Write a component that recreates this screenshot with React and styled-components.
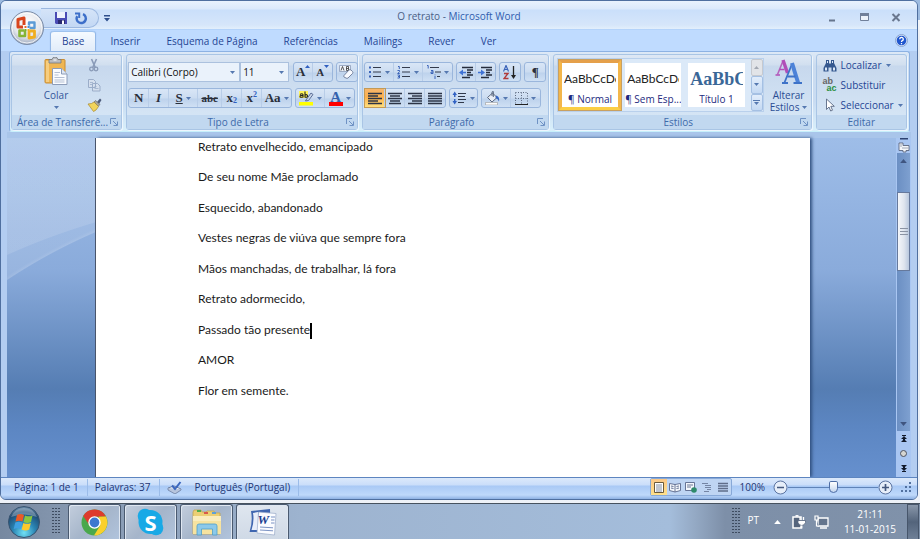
import React, { useState } from 'react';
import styled, { createGlobalStyle, css } from 'styled-components';

const GlobalStyle = createGlobalStyle`
  * {
    box-sizing: border-box;
  }
  body {
    margin: 0;
    font-family: 'Open Sans', 'Noto Sans', sans-serif;
    font-size: 10px;
    color: #1e3a7b;
  }
  button, select, input {
    font: inherit;
    color: inherit;
    margin: 0;
    padding: 0;
    border: 0;
    background: none;
  }
  svg {
    display: block;
    flex-shrink: 0;
  }
`;

const Screen = styled.div`
  display: flex;
  flex-direction: column;
  height: 100vh;
  overflow: hidden;
  background: linear-gradient(#9dbbe0 20px, #f4f6f9 20px, #e6ebf2 54px, #eef2f8);
`;

const Window = styled.div`
  position: relative;
  flex: 1;
  min-height: 0;
  display: flex;
  flex-direction: column;
  margin: 0 2px 3px 0;
  border: 1px solid #4f6f9f;
  border-radius: 6px;
  background: #b3cdf1;
  overflow: hidden;
`;

/* ---------- title bar ---------- */

const TitleBar = styled.header`
  display: grid;
  grid-template-columns: 1fr auto 1fr;
  align-items: center;
  height: 29px;
  border-bottom: 1px solid #b4d3fa;
  background: linear-gradient(#e9f2fd, #dbe9fb 8px, #cadffa 9px, #d6e6fa 24px, #e3effc);
`;

const QuickAccess = styled.div`
  display: flex;
  align-items: center;
  padding: 6px 0 0 40px;
`;

const QuickPill = styled.div`
  display: flex;
  align-items: center;
  gap: 4px;
  width: 58px;
  height: 20px;
  padding-left: 12px;
  border: 1px solid #9cb8e0;
  border-left: 0;
  border-radius: 0 10px 10px 0;
  background: linear-gradient(#d5e4f8, #c3d8f4);
`;

const Title = styled.h1`
  margin: 0;
  padding-top: 2px;
  font-size: 10px;
  font-weight: 400;
  line-height: 16px;
  color: #4a5f86;

  b {
    font-weight: 400;
    color: #2f5cae;
  }
`;

const WindowButtons = styled.div`
  display: flex;
  justify-content: flex-end;
  gap: 16px;
  padding: 4px 13px 0 0;
`;

const IconButton = styled.button`
  display: flex;
  align-items: center;
  justify-content: center;
  min-width: 16px;
  height: 16px;
`;

const OfficeButton = styled.button`
  position: absolute;
  z-index: 2;
  left: 8px;
  top: 9px;
  width: 36px;
  height: 36px;
`;

/* ---------- tabs ---------- */

const TabRow = styled.nav`
  display: flex;
  align-items: flex-end;
  height: 21px;
  padding: 0 8px 0 50px;
  gap: 4px;
  background: #bfdbff;
`;

const Tab = styled.button`
  height: 20px;
  padding: 0 11px;
  line-height: 19px;
  border: 1px solid transparent;
  border-width: 1px 0 0;
  border-radius: 3px 3px 0 0;
  color: #1f4594;
  white-space: nowrap;

  ${(p) =>
    p.$active &&
    css`
      border-color: #9fc3ee;
      background: linear-gradient(#f5faff, #e1ecf9);
      box-shadow: 1px 0 1px #8fb4e4, -1px 0 1px #8fb4e4;
    `}
`;

const Help = styled(IconButton)`
  margin: 0 0 3px auto;
`;

/* ---------- ribbon ---------- */

const Ribbon = styled.section`
  display: flex;
  gap: 4px;
  height: 81px;
  margin: 0 7px 0 8px;
  padding: 2px 2px 1px 1px;
  border: 1px solid #8db2e3;
  border-bottom-color: #c8f0fb;
  border-radius: 3px;
  background: linear-gradient(#dde9f7, #cbdcf0 14px, #c9dcf2 50px, #d9f0fb);
`;

const GroupBox = styled.div`
  flex: ${(p) => p.$size} 1 0;
  min-width: 0;
  display: flex;
  flex-direction: column;
  border: 1px solid #a9c5e5;
  border-radius: 3px;
  background: linear-gradient(#dee8f5, #d1dfef 10px, #c7d8ed 11px, #d8e8f7);
  box-shadow: 1px 1px 0 #eef6fd;
`;

const GroupBody = styled.div`
  flex: 1;
  display: flex;
  min-height: 0;
`;

const GroupLabel = styled.div`
  display: flex;
  align-items: center;
  height: 14px;
  padding: 0 3px;
  background: #c1d8f0;
  color: #3e6aaa;
  line-height: 14px;
  white-space: nowrap;

  span {
    flex: 1;
    text-align: center;
  }
`;

const Rows = styled.div`
  flex: 1;
  display: flex;
  flex-direction: column;
  gap: 6px;
  padding: 7px 0 0 1px;
`;

const Row = styled.div`
  display: flex;
  gap: 3px;
`;

const Strip = styled.div`
  display: flex;
  flex-shrink: 0;
  height: 20px;
  border: 1px solid #9ab6dc;
  border-radius: 3px;
  background: linear-gradient(#d9e6f6, #cbdcf1 9px, #bdd2ec 10px, #cfe0f4);
`;

const toolWidths = { narrow: 19, normal: 20, text: 24, split: 27, wide: 29 };

const Tool = styled.button`
  display: flex;
  align-items: center;
  justify-content: center;
  gap: 3px;
  width: ${(p) => toolWidths[p.$size || 'normal']}px;
  height: 18px;
  border-right: 1px solid #b8cde8;
  color: #2a2f3a;
  font-family: 'Liberation Serif', serif;
  font-size: ${(p) => (p.$size === 'text' ? 11 : 13)}px;
  font-weight: 700;
  line-height: 18px;

  &:last-child {
    border-right: 0;
  }

  ${(p) =>
    p.$on &&
    css`
      background: linear-gradient(#f7b56a, #fcb14f 8px, #ffdf7c);
      box-shadow: 0 0 0 1px #c39a56;
    `}
`;

const ScriptTool = styled(Tool)`
  gap: 0;

  sub, sup {
    display: block;
    font-size: 8px;
    line-height: 8px;
    color: #2f5fc0;
  }
  sup {
    align-self: flex-start;
    padding-top: 2px;
  }
  sub {
    align-self: flex-end;
    padding-bottom: 2px;
  }
`;

const Combo = styled.span`
  display: flex;
  align-items: center;
  width: ${(p) => p.$width}px;
  height: 20px;
  padding-right: 4px;
  border: 1px solid #abc1de;
  background: #eaf2fb;
  color: #111;

  select {
    flex: 1;
    min-width: 0;
    height: 18px;
    padding-left: 2px;
    appearance: none;
    outline: 0;
  }
`;

const ComboPair = styled.div`
  display: flex;
  margin-right: 1px;
`;

const PasteButton = styled.button`
  display: flex;
  flex-direction: column;
  align-items: center;
  gap: 4px;
  width: 44px;
  margin: 2px 8px 0 22px;
  color: #33569a;
  line-height: 13px;
`;

const ClipTools = styled.div`
  display: flex;
  flex-direction: column;
  gap: 4px;
  padding-top: 2px;
`;

const Gallery = styled.div`
  display: flex;
  gap: 1px;
  flex: 1;
  min-width: 0;
  height: 54px;
  margin: 3px 0 0 3px;
  padding: 1px;
  border: 1px solid #b9d0ec;
  background: #dbe9f8;
`;

const StyleCard = styled.button`
  flex: 1;
  min-width: 0;
  overflow: hidden;
  border: 3px solid #dbe9f8;
  background: #fff;
  color: #1c2a80;
  line-height: 14px;
  white-space: nowrap;

  ${(p) =>
    p.$on &&
    css`
      border-color: #e5a04a #f3b64a #fbce45;
      box-shadow: 0 0 0 1px #c8a061;
    `}
`;

const Sample = styled.span`
  display: block;
  margin: 4px 2px 3px;
  overflow: hidden;
  text-align: left;
  font: ${(p) => (p.$heading ? "700 18px 'Liberation Serif', serif" : '12px Lato, sans-serif')};
  line-height: 20px;
  color: ${(p) => (p.$heading ? '#3a6797' : '#222')};
`;

const GalleryScroll = styled.div`
  display: flex;
  flex-direction: column;
  width: 12px;
  margin: -1px -1px -1px 2px;
`;

const GalleryArrow = styled.button`
  flex: 1;
  display: flex;
  flex-direction: column;
  align-items: center;
  justify-content: center;
  gap: 1px;
  border: 1px solid ${(p) => (p.disabled ? '#c6c9cf' : '#a5c0e3')};
  border-radius: 2px;
  background: ${(p) => (p.disabled ? '#e2e4e8' : 'linear-gradient(#e2edfb, #c4d9f3)')};
`;

const ChangeStyles = styled.button`
  display: flex;
  flex-direction: column;
  align-items: center;
  width: 47px;
  padding: 4px 0 0 3px;
  color: #2a4c93;
  line-height: 12px;

  svg {
    margin-bottom: 4px;
  }
  span {
    display: flex;
    align-items: center;
    gap: 3px;
  }
  span svg {
    margin: 0;
  }
`;

const EditList = styled.div`
  display: flex;
  flex-direction: column;
  padding: 0 0 0 6px;
`;

const EditItem = styled.button`
  display: flex;
  align-items: center;
  gap: 4px;
  height: 20px;
  color: #1f4594;
`;

/* ---------- document ---------- */

const Workspace = styled.main`
  flex: 1;
  min-height: 0;
  display: flex;
  margin-left: 6px;
  margin-right: 6px;
  border-top: 6px solid #a9c5ea;
  background:
    radial-gradient(circle at 310px 609px, transparent 560px, rgba(255, 255, 255, 0.2) 561px, rgba(255, 255, 255, 0.12) 564px) 0 0 / 90px 100% no-repeat,
    radial-gradient(circle at 287px 756px, transparent 700px, rgba(255, 255, 255, 0.12) 701px) 0 0 / 90px 100% no-repeat,
    linear-gradient(#9ebde8, #8aabdb 39%, #557db3 74%, #5c86c2 85%, #6690ce);
`;

const Canvas = styled.div`
  flex: 1;
  display: flex;
  padding: 0 86px 0 89px;
`;

const Paper = styled.article`
  flex: 1;
  padding: 0 102px;
  background: #fff;
  box-shadow: 2px 0 3px #31507f, -1px 0 0 #4b566b;
  color: #1a1a1a;
  font-family: Lato, 'Open Sans', sans-serif;
  font-size: 12px;
  line-height: 18px;

  p {
    margin: 0 0 12px;
  }
  p:nth-child(even) {
    margin-bottom: 13px;
  }
`;

const Caret = styled.span`
  display: inline-block;
  width: 2px;
  height: 16px;
  background: #000;
  vertical-align: middle;
`;

const Scroll = styled.div`
  display: flex;
  flex-direction: column;
  width: 15px;
  padding-bottom: 1px;
  background: #a9c6f2;

  button {
    display: flex;
    justify-content: center;
    align-items: center;
    height: 15px;
  }
`;

const Track = styled.div`
  flex: 1;
  display: flex;
  flex-direction: column;
  margin: 0 1px;
  background: linear-gradient(90deg, #6b8fc3, #7ea0d0);
`;

const Thumb = styled.div`
  display: flex;
  align-items: center;
  justify-content: center;
  height: 79px;
  margin: 24px 0 auto;
  border: 1px solid #66799c;
  background: linear-gradient(90deg, #f4f6fa, #dfe5ee 55%, #b9c8de);
`;

/* ---------- status bar ---------- */

const StatusBar = styled.footer`
  display: flex;
  align-items: center;
  height: 22px;
  padding: 0 6px 3px 13px;
  border-top: 1px solid #5d85c0;
  background: linear-gradient(#dce9fb, #cadefa 7px, #a9c9f5 8px, #bfd9fb 17px, #8db1e3);
  color: #1e3574;
  white-space: nowrap;
`;

const StatusCell = styled.span`
  display: flex;
  align-items: center;
  height: 17px;
  gap: 12px;
  padding-right: 8px;
  margin-right: 7px;
  border-right: 1px solid #9bbce9;
`;

const ViewButtons = styled.div`
  display: flex;
  align-items: center;
  margin-left: auto;
  height: 18px;
  border: 1px solid #88a9d8;
  border-radius: 2px;
  background: #bfd5f3;
`;

const ViewButton = styled.button`
  display: flex;
  align-items: center;
  justify-content: center;
  width: 16px;
  height: 16px;
  background: ${(p) => (p.$on ? 'linear-gradient(#fbc787, #ffe08a)' : 'none')};
`;

const ZoomLabel = styled.label`
  margin: 0 8px;
`;

const ZoomRange = styled.input`
  width: 90px;
  height: 14px;
  appearance: none;
  background: linear-gradient(#5f83b8, #5f83b8) center / 100% 1px no-repeat;

  &::-webkit-slider-thumb {
    appearance: none;
    width: 9px;
    height: 12px;
    border: 1px solid #4e6da5;
    border-radius: 2px 2px 5px 5px;
    background: linear-gradient(#fff, #c4d6ee);
  }
`;

const RoundButton = styled(IconButton)`
  min-width: 15px;
`;

const Corner = styled.span`
  margin-left: 8px;
`;

/* ---------- taskbar ---------- */

const Taskbar = styled.div`
  display: flex;
  align-items: center;
  height: 36px;
  border-top: 1px solid #46525f;
  background: linear-gradient(90deg, #7688a0, #8496ae 60px, #9db3cf 300px, #a4bddb 670px, #94a9c4 695px, #7d8fa8 725px, #8092aa);
  color: #fff;
`;

const StartButton = styled.button`
  margin: 0 11px 0 7px;
  width: 34px;
  height: 34px;
`;

const TaskButtons = styled.div`
  display: flex;
  gap: 3px;
  height: 36px;
  margin-left: 7px;
`;

const TaskButton = styled.button`
  display: flex;
  align-items: center;
  justify-content: center;
  width: 53px;
  border: 1px solid #4a5a70;
  border-bottom: 0;
  border-radius: 3px 3px 0 0;
  background: ${(p) =>
    p.$on
      ? 'linear-gradient(#dfe6ef, #cfd9e6)'
      : 'linear-gradient(135deg, #c3cedd, #a5b5ca 50%, #b1c4dd)'};
  box-shadow: inset 1px 1px 0 #dfe7f1, inset -1px 0 0 #dfe7f1;
`;

const Tray = styled.div`
  display: flex;
  align-items: center;
  height: 36px;
  margin-left: auto;
`;

const Language = styled.span`
  margin: 0 10px 4px 6px;
`;

const TrayIcons = styled.div`
  display: flex;
  align-items: center;
  gap: 6px;
`;

const Clock = styled.div`
  width: 78px;
  padding-left: 4px;
  text-align: center;
  line-height: 15px;
`;

const ShowDesktop = styled.button`
  width: 12px;
  height: 36px;
  margin-right: 1px;
  border: 1px solid #47566b;
  background: linear-gradient(#8997aa, #53647b 50%, #6f8097);
`;

/* ---------- drawings ---------- */

const Arrow = ({ color = '#5578b0', up, big }) => (
  <svg width={big ? 7 : 5} height={big ? 4 : 3} viewBox="0 0 5 3">
    <path d={up ? 'M0 3h5L2.500 0z' : 'M0 0h5L2.500 3z'} fill={color} />
  </svg>
);

const Launcher = () => (
  <svg width="8" height="8" viewBox="0 0 8 8" fill="none" stroke="#6f92c4">
    <path d="M.5 6V.5H6M3 3l4 4M7.500 3.500v4h-4" />
  </svg>
);

const OfficeLogo = () => (
  <svg width="36" height="36" viewBox="0 0 36 36">
    <defs>
      <radialGradient id="orb" cx=".5" cy=".35" r=".6">
        <stop offset="0" stopColor="#fff" />
        <stop offset=".7" stopColor="#e3e6ec" />
        <stop offset="1" stopColor="#aab4c6" />
      </radialGradient>
    </defs>
    <circle cx="18" cy="18" r="16.500" fill="url(#orb)" stroke="#7b8da9" />
    <circle cx="18" cy="18" r="15" fill="none" stroke="#fff" strokeOpacity=".8" />
    <g fill="none" strokeLinejoin="round">
      <path d="M14 17H9V9.500L15 8v7" stroke="#d8441c" strokeWidth="3" />
      <path d="M20 12.500h5.500V18H20z" stroke="#5b9bd6" strokeWidth="2.400" />
      <path d="M16 20.500H10.500V26H16z" stroke="#86b434" strokeWidth="2.600" />
      <path d="M20 21h5.500v6L20 28z" stroke="#efae20" strokeWidth="2.800" />
    </g>
    <path d="M15.500 15.500h5v5h-5z" fill="#fff" />
    <path d="M15.500 16h2v2h-2z" fill="#e86a2a" />
    <path d="M18.500 16h2v2h-2z" fill="#4a90d2" />
    <path d="M15.500 19h2v2h-2z" fill="#7cb02e" />
    <path d="M18.500 19h2v2h-2z" fill="#f0ac1c" />
  </svg>
);

const SaveIcon = () => (
  <svg width="14" height="14" viewBox="0 0 14 14">
    <path d="M1 1h12v12H2l-1-1z" fill="#4a4bb4" />
    <path d="M3 1h8v6H3z" fill="#eef2fc" />
    <path d="M4 9h7v4H4z" fill="#2a2b72" />
    <path d="M8 9.500h2V13H8z" fill="#fff" />
  </svg>
);

const RepeatIcon = () => (
  <svg width="14" height="14" viewBox="0 0 14 14" fill="none" stroke="#3d6fc9" strokeWidth="2.400">
    <path d="M9 3.200A4.600 4.600 0 1 1 3.200 5.200" />
    <path d="M1 2.500h4.200V7" strokeWidth="2" />
  </svg>
);

const QatMore = () => (
  <svg width="6" height="7" viewBox="0 0 6 7">
    <path d="M0 0h6v1.500H0zM0 3h6L3 6.500z" fill="#2e4f8c" />
  </svg>
);

const Minimize = () => (
  <svg width="8" height="10" viewBox="0 0 8 10"><path d="M1 7.500h6v2H1z" fill="#66758c" /></svg>
);
const Restore = () => (
  <svg width="9" height="8" viewBox="0 0 9 8"><path d="M.5.500h8v7h-8z" fill="#edf3fb" stroke="#71809a" /><path d="M0 0h9v3H0z" fill="#71809a" /></svg>
);
const Close = () => (
  <svg width="10" height="9" viewBox="0 0 10 9"><path d="M1.500 1l7 7m0-7l-7 7" stroke="#69778e" strokeWidth="2" /></svg>
);

const HelpIcon = () => (
  <svg width="13" height="13" viewBox="0 0 13 13">
    <circle cx="6.500" cy="6.500" r="6" fill="#d6e4f8" stroke="#8aa5d0" />
    <circle cx="6.500" cy="6.500" r="4.800" fill="#1f56cf" />
    <path d="M4.700 5.200a1.800 1.700 0 1 1 2.600 1.500c-.6.300-.8.600-.8 1.200M6.500 9v1.200" fill="none" stroke="#fff" strokeWidth="1.300" />
  </svg>
);

const PasteIcon = () => (
  <svg width="24" height="28" viewBox="0 0 24 28">
    <path d="M1 3.500q0-1 1-1h18q1 0 1 1V25q0 1-1 1H2q-1 0-1-1z" fill="#efb653" stroke="#c98d33" />
    <path d="M2 4h3v21H2z" fill="#f6cd80" />
    <path d="M5 2.500h3Q8.500 0 11 0t3 2.500h3V6H5z" fill="#b9bcc2" stroke="#74787f" strokeWidth=".8" />
    <path d="M9.500 3h3" stroke="#fff" />
    <path d="M8.500 11.500h9l5.500 5.500v10.500H8.500z" fill="#fafcff" stroke="#8c9cb8" />
    <path d="M17.500 11.500V17H23" fill="#dfe7f3" stroke="#8c9cb8" />
    <path d="M10.500 15.500H16M10.500 18h4M10.500 20.500h10M10.500 23h10M10.500 25h10" stroke="#b4bfd3" />
  </svg>
);

const CutIcon = () => (
  <svg width="14" height="16" viewBox="0 0 14 16" fill="none" stroke="#8a9bb8">
    <path d="M4.500 2L8.500 11M9.500 2L5.500 11" strokeWidth="1.600" />
    <circle cx="4.500" cy="12" r="1.800" strokeWidth="1.300" />
    <circle cx="9" cy="12" r="1.800" strokeWidth="1.300" />
  </svg>
);

const CopyIcon = () => (
  <svg width="14" height="14" viewBox="0 0 14 14" fill="#d5dfee" stroke="#9badc9">
    <path d="M1.500 1.500h5l2 2v6h-7zM5.500 5.500h5l2.500 2.500v5h-7.500z" />
    <path d="M3 4.500h3M3 6.500h2M7.500 8.500h2M7.500 10.500h4" strokeWidth=".8" />
  </svg>
);

const BrushIcon = () => (
  <svg width="15" height="14" viewBox="0 0 15 14">
    <path d="M10 4l3-3.500 1.500 1.500L12 6z" fill="#4d5c7c" />
    <path d="M7 4l1.500-1.500L13 6.500 11 8.500z" fill="#a7a59b" stroke="#65635b" strokeWidth=".6" />
    <path d="M1 6q4 0 6-2l4.500 4.500Q9 13 6.500 13.500z" fill="#f1d45b" stroke="#a78a34" strokeWidth=".7" />
  </svg>
);

const ClearIcon = () => (
  <svg width="18" height="16" viewBox="0 0 18 16">
    <path d="M1.500 1.500h11v6h-11z" fill="#f0f4fb" stroke="#8b9bb8" strokeWidth=".8" />
    <path d="M3 6.500l1.500-4L6 6.500M8.500 2.500v4h2v-4zM8.500 4.500h2" fill="none" stroke="#333" strokeWidth=".8" />
    <path d="M6 11.500L11 6q1-.8 2 0l1.500 1.500q.8 1 0 2L10 14q-1 .8-2 0l-2-1q-.6-.8 0-1.500z" fill="#f8faff" stroke="#6d7b96" strokeWidth=".9" />
  </svg>
);

const HighlightIcon = () => (
  <svg width="15" height="16" viewBox="0 0 15 16">
    <path d="M0 1h9v7H0z" fill="#fff35a" />
    <path d="M1 4.500q2-1.500 3 0V7.500M4 5.500q-3-.3-3 1t3 .5M6 1.500v6M6 5q2-1 2.500.7T6 7.300" fill="none" stroke="#222" strokeWidth="1.100" />
    <path d="M7 10L12 3l2 1.500L9.500 10.500 6.500 11z" fill="#c9d5e8" stroke="#4e628c" strokeWidth=".9" />
    <path d="M0 12h14v3.500H0z" fill="#ffff00" />
  </svg>
);

const FontColor = styled.span`
  width: 14px;
  height: 15px;
  border-bottom: 4px solid #f00;
  color: #3562ad;
  font-size: 15px;
  line-height: 12px;
`;

const Lines = ({ rows }) => (
  <svg width="14" height="13" viewBox="0 0 14 13" stroke="#2c3446" strokeWidth="1.300">
    {rows.map(([x1, x2], i) => (
      <path key={i} d={`M${x1} ${1.500 + i * 2.500}H${x2}`} />
    ))}
  </svg>
);

const ListIcon = ({ kind }) => (
  <svg width="14" height="14" viewBox="0 0 14 14">
    {kind === 'bullets' && <path d="M1 1.500h2v2H1zM1 6h2v2H1zM1 10.500h2v2H1z" fill="#3a63b8" />}
    {kind === 'numbers' && (
      <path d="M1 1.500h1.300V4M.5 5.500h2v1.200L.7 8.500h2M.5 10h2v3h-2M1 11.500h1.500" fill="none" stroke="#3a63b8" />
    )}
    {kind === 'levels' && (
      <path d="M0 .5h1.200v3M4 5.500h2v3H4v-1.500h2M8 9.500v.8M8 11v3" fill="none" stroke="#3a63b8" />
    )}
    {kind === 'levels' ? (
      <path d="M3 2.500h9M8 7h6M10 11.500h3" stroke="#333b4d" strokeWidth="1.200" />
    ) : (
      <path d="M5 2.500h8M5 7h8M5 11.500h8" stroke="#333b4d" strokeWidth="1.200" />
    )}
  </svg>
);

const IndentIcon = ({ right }) => (
  <svg width="15" height="13" viewBox="0 0 15 13">
    <path d="M3 1.500h11M8 4h6M8 6.500h4M8 9h6M3 11.500h8" stroke="#262d3c" strokeWidth="1.400" />
    <path d={right ? 'M0 5.800h3V3.500l4 3-4 3V7.300H0z' : 'M7 5.800H4V3.500L0 6.500l4 3V7.300h3z'} fill="#3f72d4" />
  </svg>
);

const SortIcon = () => (
  <svg width="14" height="15" viewBox="0 0 14 15" fill="none">
    <path d="M.5 6.500L3 .5l2.500 6M1.500 4.500h3" stroke="#3a63b8" strokeWidth="1.200" />
    <path d="M1 8.500h4L1 13.500h4.500" stroke="#b13a3a" strokeWidth="1.400" />
    <path d="M10.500 1v11" stroke="#222" strokeWidth="1.300" />
    <path d="M8 10h5l-2.500 4z" fill="#222" />
  </svg>
);

const SpacingIcon = () => (
  <svg width="15" height="14" viewBox="0 0 15 14">
    <path d="M6 2.500h8M6 5.500h7M6 8.500h8M6 11.500h6" stroke="#30384a" strokeWidth="1.200" />
    <path d="M.5 4L2.700.5 5 4H3.500v2h-1.500V4zM.5 10h1.500V8h1.500v2H5l-2.300 3.500z" fill="#3262c4" />
  </svg>
);

const BucketIcon = () => (
  <svg width="15" height="14" viewBox="0 0 15 14">
    <path d="M2.500 6.500L7.500 2l4.500 4.500-5 4.500z" fill="#e9eef6" stroke="#59677f" />
    <path d="M7 5V1.500q0-1.200 1.300-1V6" fill="none" stroke="#59677f" />
    <path d="M11 4.500q4 1 3 6-1-3-3.500-3.500z" fill="#3565c2" />
    <path d="M.5 11.500h12V14H.5z" fill="#fbfbfb" stroke="#999" strokeWidth=".6" />
  </svg>
);

const BorderIcon = () => (
  <svg width="13" height="13" viewBox="0 0 13 13" fill="none" stroke="#5d6a80">
    <path d="M.5.500h12v12M.5.500v12M6.500.500v12M.5 6.500h12" strokeDasharray="1 1.500" />
    <path d="M0 12.500h13" stroke="#222" />
  </svg>
);

const StylesIcon = () => (
  <svg width="27" height="26" viewBox="0 0 27 26" fill="none">
    <path d="M2.500 15.500L8 2" stroke="#b565bd" strokeWidth="1.600" />
    <path d="M8 1l4.500 13" stroke="#b14fb8" strokeWidth="3.400" />
    <path d="M4.500 10.500h5M.5 16H5" stroke="#b14fb8" strokeWidth="1.600" />
    <path d="M9.500 23.500L17 5" stroke="#3d72c8" strokeWidth="1.800" />
    <path d="M17 4l6 19.500" stroke="#4c82d8" strokeWidth="4" />
    <path d="M12.500 17.500h8M7 24h6M18.500 24H27" stroke="#3d72c8" strokeWidth="1.800" />
  </svg>
);

const FindIcon = () => (
  <svg width="14" height="13" viewBox="0 0 14 13">
    <path d="M3 1h3v3l1 1 1-1V1h3v3l2.500 5v3.500H8.500V8.500h-3v4H.5V9L3 4z" fill="#35588f" />
    <path d="M2 8.500h2v3H2zM10 8.500h2v3h-2zM4 2h1v2H4zM9 2h1v2H9z" fill="#dbe8f8" />
  </svg>
);

const ReplaceIcon = styled.span`
  display: flex;
  flex-direction: column;
  width: 14px;
  font: 700 9px 'Liberation Sans', sans-serif;
  line-height: 7px;
  color: #666;
  text-align: left;

  b {
    color: #2b8f3f;
    text-align: right;
  }
`;

const SelectIcon = () => (
  <svg width="14" height="14" viewBox="0 0 14 14">
    <path d="M3.500 1v10.500l2.500-2.500 1.700 4 1.800-.8-1.700-3.900h3.500z" fill="#fff" stroke="#5a6983" strokeWidth=".9" />
  </svg>
);

const ProofIcon = () => (
  <svg width="16" height="13" viewBox="0 0 16 13">
    <path d="M1 7l6-2 7 3-6 4z" fill="#fff" stroke="#6d7fa1" />
    <path d="M1 7v2l7 4 6-4V8" fill="#b7c5dd" stroke="#6d7fa1" strokeWidth=".8" />
    <path d="M5 4.500l3 3.500L13.500 1" fill="none" stroke="#3a66be" strokeWidth="2" />
  </svg>
);

const ViewIcon = ({ kind }) => (
  <svg width="12" height="11" viewBox="0 0 12 11" fill="none">
    {kind === 'print' && <path d="M1.500.500h9v10h-9z" fill="#fff" stroke="#6b5a3c" />}
    {kind === 'print' && <path d="M3 3h6M3 5h6M3 7h6M3 9h6" stroke="#66718a" strokeWidth=".8" />}
    {kind === 'read' && <path d="M.5 1.500L6 2.500l5.500-1v7L6 10 .5 8.500zM6 2.500V10M2 4l2.500.500M2 6l2.500.500M7.500 4.500L10 4M7.500 6.500L10 6" fill="#f4f7fc" stroke="#59678a" strokeWidth=".9" />}
    {kind === 'web' && <path d="M.5.500h9v8h-9zM2 3h6M2 5h4" fill="#f4f7fc" stroke="#59678a" strokeWidth=".9" />}
    {kind === 'web' && <circle cx="9" cy="8" r="2.800" fill="#2e8a6b" />}
    {kind === 'outline' && <path d="M1 1.500h6M4 3.500h6M4 5.500h6M6 7.500h4M3 9.500h5" stroke="#7585a4" />}
    {kind === 'draft' && <path d="M1 1.500h10M1 4h10M1 6.500h10M1 9h10" stroke="#5f6d8a" strokeWidth="1.300" />}
  </svg>
);

const RoundIcon = ({ plus }) => (
  <svg width="15" height="15" viewBox="0 0 15 15">
    <circle cx="7.500" cy="7.500" r="6.500" fill="#e6eef9" stroke="#5c74a0" />
    <path d={plus ? 'M4 7.500h7M7.500 4v7' : 'M4 7.500h7'} stroke="#45597f" strokeWidth="1.700" />
  </svg>
);

const Grip = ({ cols, rows, color }) => (
  <svg width={cols * 3} height={rows * 3} viewBox={`0 0 ${cols * 3} ${rows * 3}`} fill={color}>
    {Array.from({ length: cols * rows }, (_, i) => (
      <rect key={i} x={(i % cols) * 3} y={Math.floor(i / cols) * 3} width="2" height="1" />
    ))}
  </svg>
);

const ResizeGrip = () => (
  <svg width="10" height="10" viewBox="0 0 10 10" fill="#52719f">
    <path d="M8 0h2v2H8zM4 4h2v2H4zM8 4h2v2H8zM0 8h2v2H0zM4 8h2v2H4zM8 8h2v2H8z" />
  </svg>
);

const RulerIcon = () => (
  <svg width="12" height="15" viewBox="0 0 12 15">
    <path d="M2 0h8v1.500H2z" fill="#2c4270" />
    <path d="M1 5h4v2.500h6v5H8V14H5v-1.500H1z" fill="#f4f6fa" stroke="#5c6880" strokeWidth=".9" />
    <path d="M3 6v3M5 9v2M7 9v2M9 9v2" stroke="#7b8799" strokeWidth=".7" />
  </svg>
);

const PageJump = ({ down }) => (
  <svg width="6" height="7" viewBox="0 0 6 7">
    <path
      d={down ? 'M0 0h6L4 2v1h2L3 6 0 3h2V2zM1 6h4v1H1z' : 'M0 7h6L4 5V4h2L3 1 0 4h2v1zM1 0h4v1H1z'}
      fill="#111a2c"
    />
  </svg>
);

const BrowseDot = () => (
  <svg width="7" height="7" viewBox="0 0 7 7">
    <circle cx="3.500" cy="3.500" r="3" fill="#d5d5d2" stroke="#4c5261" />
  </svg>
);

const WindowsOrb = () => (
  <svg width="34" height="34" viewBox="0 0 34 34">
    <defs>
      <radialGradient id="start" cx=".5" cy=".85" r=".9">
        <stop offset="0" stopColor="#6fe0f5" />
        <stop offset=".4" stopColor="#2a85b4" />
        <stop offset=".75" stopColor="#1f4c74" />
        <stop offset="1" stopColor="#8aa7c0" />
      </radialGradient>
    </defs>
    <circle cx="17" cy="17" r="15.500" fill="url(#start)" stroke="#38536f" />
    <path d="M4 12Q8 3 17 3t13 9q-13-5-26 0z" fill="#fff" opacity=".3" />
    <path d="M10 10q3-1.800 7 0l-1.500 6.500q-3.500-1.500-7 0z" fill="#ea5a27" />
    <path d="M18 10.500q4 1.700 7.500 0L24 17q-4 1.800-7.500 0z" fill="#8bc63f" />
    <path d="M8.300 17.500q3.500-1.700 7 0L13.700 24q-3.500-1.700-7 0z" fill="#3fa0e0" />
    <path d="M16.300 18q3.500 1.700 7.500 0l-1.600 6.500q-3.500 1.800-7.500 0z" fill="#fcc92b" />
  </svg>
);

const ChromeIcon = () => (
  <svg width="27" height="27" viewBox="0 0 26 26">
    <circle cx="13" cy="13" r="12.500" fill="#4aa84c" />
    <path d="M2.200 6.700A12.500 12.500 0 0 1 24 7.200L13 7.500l-5 8z" fill="#dd3b2c" />
    <path d="M24 7.200A12.500 12.500 0 0 1 12.500 25.500l6-9.500L17 7.500z" fill="#fad02c" />
    <circle cx="13" cy="13" r="6" fill="#fff" />
    <circle cx="13" cy="13" r="4.700" fill="#3c78cf" />
  </svg>
);

const SkypeBadge = styled.span`
  display: grid;
  width: 27px;
  height: 28px;

  svg, b {
    grid-area: 1 / 1;
  }
  b {
    color: #fff;
    font: 700 22px 'Open Sans', sans-serif;
    line-height: 28px;
    text-align: center;
  }
`;

const SkypeIcon = () => (
  <SkypeBadge>
    <svg width="27" height="28" viewBox="0 0 27 28" fill="#18a9e6">
      <circle cx="13.500" cy="14" r="12" />
      <circle cx="8" cy="8" r="7.300" />
      <circle cx="19" cy="20" r="7.300" />
    </svg>
    <b>S</b>
  </SkypeBadge>
);

const FolderIcon = () => (
  <svg width="30" height="28" viewBox="0 0 30 28">
    <path d="M1 4l1-2h7l1 2h4l1-1h7l1 2h5v21H1z" fill="#eccf74" stroke="#c3a452" strokeWidth=".8" />
    <path d="M5 2h4v2H5z" fill="#4fae4a" />
    <path d="M12 4h4v2h-4z" fill="#d9584a" />
    <path d="M20 4h4v2h-4z" fill="#5da0d8" />
    <path d="M1 8h28v18H1z" fill="#f6e3a0" />
    <path d="M1 8h28v5H1z" fill="#faedbd" />
    <path d="M5 27v-9q0-2 2-2h16q2 0 2 2v9h-4.500v-6h-11v6z" fill="#8cc9ea" stroke="#4f9fc9" strokeWidth=".8" />
  </svg>
);

const WordBadge = styled.span`
  display: grid;
  width: 28px;
  height: 28px;

  svg, b {
    grid-area: 1 / 1;
  }
  b {
    padding: 4px 0 0 9px;
    color: #1e3f8f;
    font: italic 700 13px 'Liberation Serif', serif;
    line-height: 16px;
    text-align: left;
  }
`;

const WordIcon = () => (
  <WordBadge>
    <svg width="28" height="28" viewBox="0 0 28 28">
      <path d="M2 3l19-2 .5 23L.5 24Q4 14 2 3z" fill="#3f66b0" />
      <path d="M4 5l5-1v18H2.500Q5.500 13 4 5z" fill="#e8eefa" />
      <path d="M9.500 4L27 5.500 25.500 27 8 25z" fill="#fbfcff" stroke="#9aabc9" strokeWidth=".7" />
      <path d="M22 9h4M22 12h3.500M22 15h3.500M11 19l13 .8M11 22l13 .8" stroke="#7b93c4" />
    </svg>
    <b>W</b>
  </WordBadge>
);

const PlugIcon = () => (
  <svg width="15" height="14" viewBox="0 0 15 14" fill="none" stroke="#fff">
    <path d="M1 2h8v11H1z" fill="#55657d" strokeWidth="1.500" />
    <path d="M3.500.8h3" strokeWidth="1.500" />
    <path d="M6 5.500h7.500v2q-1 3-3.700 3T6 7.500z" fill="#fff" stroke="#55657d" strokeWidth=".8" />
    <path d="M8 5V2M11.500 5V2M9.800 10.500V13.500" strokeWidth="1.300" />
  </svg>
);

const NetworkIcon = () => (
  <svg width="15" height="14" viewBox="0 0 15 14" fill="none" stroke="#fff">
    <path d="M4 3h10v8H4z" fill="#64758d" strokeWidth="1.300" />
    <path d="M6 13h7" strokeWidth="1.500" />
    <path d="M1 1h3v4H1zM2.500 5v6H5" fill="#7b8ca4" strokeWidth="1.200" />
  </svg>
);

/* ---------- composed parts ---------- */

const Group = ({ label, size, launcher, children }) => (
  <GroupBox $size={size}>
    <GroupBody>{children}</GroupBody>
    <GroupLabel>
      <span>{label}</span>
      {launcher && <Launcher />}
    </GroupLabel>
  </GroupBox>
);

const tabs = ['Base', 'Inserir', 'Esquema de Página', 'Referências', 'Mailings', 'Rever', 'Ver'];

const poem = [
  'Retrato envelhecido, emancipado',
  'De seu nome Mãe proclamado',
  'Esquecido, abandonado',
  'Vestes negras de viúva que sempre fora',
  'Mãos manchadas, de trabalhar, lá fora',
  'Retrato adormecido,',
  'Passado tão presente',
  'AMOR',
  'Flor em semente.',
];

const alignments = [
  { name: 'Esquerda', rows: [[0, 14], [0, 10], [0, 14], [0, 10], [0, 14]] },
  { name: 'Centro', rows: [[0, 14], [2, 12], [0, 14], [2, 12], [1, 13]] },
  { name: 'Direita', rows: [[0, 14], [4, 14], [0, 14], [4, 14], [0, 14]] },
  { name: 'Justificar', rows: [[0, 14], [0, 14], [0, 14], [0, 14], [0, 14]] },
];

const App = () => {
  const [tab, setTab] = useState('Base');
  const [align, setAlign] = useState('Esquerda');
  const [zoom, setZoom] = useState(100);

  return (
    <Screen>
      <GlobalStyle />
      <Window>
        <OfficeButton aria-label="Office"><OfficeLogo /></OfficeButton>
        <TitleBar>
          <QuickAccess>
            <QuickPill>
              <IconButton aria-label="Guardar"><SaveIcon /></IconButton>
              <IconButton aria-label="Repetir"><RepeatIcon /></IconButton>
            </QuickPill>
            <IconButton aria-label="Personalizar"><QatMore /></IconButton>
          </QuickAccess>
          <Title>O retrato - <b>Microsoft Word</b></Title>
          <WindowButtons>
            <IconButton aria-label="Minimizar"><Minimize /></IconButton>
            <IconButton aria-label="Restaurar"><Restore /></IconButton>
            <IconButton aria-label="Fechar"><Close /></IconButton>
          </WindowButtons>
        </TitleBar>

        <TabRow>
          {tabs.map((name) => (
            <Tab key={name} $active={name === tab} onClick={() => setTab(name)}>{name}</Tab>
          ))}
          <Help aria-label="Ajuda"><HelpIcon /></Help>
        </TabRow>

        <Ribbon>
          <Group label="Área de Transferê..." size={111} launcher>
            <PasteButton><PasteIcon />Colar<Arrow /></PasteButton>
            <ClipTools>
              <IconButton aria-label="Cortar"><CutIcon /></IconButton>
              <IconButton aria-label="Copiar"><CopyIcon /></IconButton>
              <IconButton aria-label="Pincel"><BrushIcon /></IconButton>
            </ClipTools>
          </Group>

          <Group label="Tipo de Letra" size={234} launcher>
            <Rows>
              <Row>
                <ComboPair>
                  <Combo $width={112}>
                    <select aria-label="Tipo de letra"><option>Calibri (Corpo)</option></select>
                    <Arrow />
                  </Combo>
                  <Combo $width={49}>
                    <select aria-label="Tamanho"><option>11</option></select>
                    <Arrow />
                  </Combo>
                </ComboPair>
                <Strip>
                  <ScriptTool $size="narrow" aria-label="Aumentar">A<sup><Arrow up color="#2f5fc0" /></sup></ScriptTool>
                  <ScriptTool $size="narrow" aria-label="Diminuir"><small>A</small><sup><Arrow color="#2f5fc0" /></sup></ScriptTool>
                </Strip>
                <Strip><Tool aria-label="Limpar formatação"><ClearIcon /></Tool></Strip>
              </Row>
              <Row>
                <Strip>
                  <Tool>N</Tool>
                  <Tool><i>I</i></Tool>
                  <Tool $size="wide"><u>S</u><Arrow /></Tool>
                  <Tool $size="text"><s>abc</s></Tool>
                  <ScriptTool>x<sub>2</sub></ScriptTool>
                  <ScriptTool>x<sup>2</sup></ScriptTool>
                  <Tool $size="wide">Aa<Arrow /></Tool>
                </Strip>
                <Strip>
                  <Tool $size="wide" aria-label="Realce"><HighlightIcon /><Arrow /></Tool>
                  <Tool $size="wide"><FontColor>A</FontColor><Arrow /></Tool>
                </Strip>
              </Row>
            </Rows>
          </Group>

          <Group label="Parágrafo" size={188} launcher>
            <Rows>
              <Row>
                <Strip>
                  <Tool $size="wide" aria-label="Marcas"><ListIcon kind="bullets" /><Arrow /></Tool>
                  <Tool $size="wide" aria-label="Numeração"><ListIcon kind="numbers" /><Arrow /></Tool>
                  <Tool $size="wide" aria-label="Vários níveis"><ListIcon kind="levels" /><Arrow /></Tool>
                </Strip>
                <Strip>
                  <Tool $size="narrow" aria-label="Diminuir avanço"><IndentIcon /></Tool>
                  <Tool $size="narrow" aria-label="Aumentar avanço"><IndentIcon right /></Tool>
                </Strip>
                <Strip><Tool aria-label="Ordenar"><SortIcon /></Tool></Strip>
                <Strip><Tool>¶</Tool></Strip>
              </Row>
              <Row>
                <Strip>
                  {alignments.map(({ name, rows }) => (
                    <Tool key={name} $on={name === align} aria-label={name} onClick={() => setAlign(name)}>
                      <Lines rows={rows} />
                    </Tool>
                  ))}
                </Strip>
                <Strip><Tool $size="split" aria-label="Espaçamento"><SpacingIcon /><Arrow /></Tool></Strip>
                <Strip>
                  <Tool $size="wide" aria-label="Sombreado"><BucketIcon /><Arrow /></Tool>
                  <Tool $size="wide" aria-label="Limites"><BorderIcon /><Arrow /></Tool>
                </Strip>
              </Row>
            </Rows>
          </Group>

          <Group label="Estilos" size={261} launcher>
            <Gallery>
              <StyleCard $on><Sample>AaBbCcDc</Sample>¶ Normal</StyleCard>
              <StyleCard><Sample>AaBbCcDc</Sample>¶ Sem Esp...</StyleCard>
              <StyleCard><Sample $heading>AaBbCc</Sample>Título 1</StyleCard>
              <GalleryScroll>
                <GalleryArrow disabled aria-label="Anterior"><Arrow up color="#a3a8b2" /></GalleryArrow>
                <GalleryArrow aria-label="Seguinte"><Arrow /></GalleryArrow>
                <GalleryArrow aria-label="Mais">
                  <svg width="7" height="1"><path d="M0 0h7v1H0z" fill="#5578b0" /></svg>
                  <Arrow />
                </GalleryArrow>
              </GalleryScroll>
            </Gallery>
            <ChangeStyles>
              <StylesIcon />
              Alterar
              <span>Estilos <Arrow /></span>
            </ChangeStyles>
          </Group>

          <Group label="Editar" size={91}>
            <EditList>
              <EditItem><FindIcon />Localizar<Arrow /></EditItem>
              <EditItem>
                <ReplaceIcon aria-hidden="true">ab<b>ac</b></ReplaceIcon>
                Substituir
              </EditItem>
              <EditItem><SelectIcon />Seleccionar<Arrow /></EditItem>
            </EditList>
          </Group>
        </Ribbon>

        <Workspace>
          <Canvas>
            <Paper>
              {poem.map((line) => (
                <p key={line}>
                  {line}
                  {line.endsWith('presente') && <Caret />}
                </p>
              ))}
            </Paper>
          </Canvas>
          <Scroll>
            <button aria-label="Régua"><RulerIcon /></button>
            <Track>
              <button aria-label="Para cima"><Arrow up big color="#3f5580" /></button>
              <Thumb>
                <svg width="8" height="7"><path d="M0 .5h8M0 3.500h8M0 6.500h8" stroke="#8a93a3" /></svg>
              </Thumb>
              <button aria-label="Para baixo"><Arrow big color="#3f5580" /></button>
            </Track>
            <button aria-label="Página anterior"><PageJump /></button>
            <button aria-label="Seleccionar objecto"><BrowseDot /></button>
            <button aria-label="Página seguinte"><PageJump down /></button>
          </Scroll>
        </Workspace>

        <StatusBar>
          <StatusCell>Página: 1 de 1</StatusCell>
          <StatusCell>Palavras: 37</StatusCell>
          <StatusCell><ProofIcon />Português (Portugal)</StatusCell>
          <ViewButtons>
            {['print', 'read', 'web', 'outline', 'draft'].map((kind, i) => (
              <ViewButton key={kind} $on={i === 0} aria-label={kind}><ViewIcon kind={kind} /></ViewButton>
            ))}
          </ViewButtons>
          <ZoomLabel htmlFor="zoom">{zoom}%</ZoomLabel>
          <RoundButton aria-label="Reduzir" onClick={() => setZoom(zoom - 10)}><RoundIcon /></RoundButton>
          <ZoomRange id="zoom" type="range" min="0" max="200" value={zoom} onChange={(e) => setZoom(Number(e.target.value))} />
          <RoundButton aria-label="Ampliar" onClick={() => setZoom(zoom + 10)}><RoundIcon plus /></RoundButton>
          <Corner><ResizeGrip /></Corner>
        </StatusBar>
      </Window>

      <Taskbar>
        <StartButton aria-label="Iniciar"><WindowsOrb /></StartButton>
        <Grip cols={3} rows={9} color="#3f4d61" />
        <TaskButtons>
          <TaskButton aria-label="Chrome"><ChromeIcon /></TaskButton>
          <TaskButton aria-label="Skype"><SkypeIcon /></TaskButton>
          <TaskButton aria-label="Explorador"><FolderIcon /></TaskButton>
          <TaskButton $on aria-label="Word"><WordIcon /></TaskButton>
        </TaskButtons>
        <Tray>
          <Grip cols={3} rows={9} color="#3f4d61" />
          <Language>PT</Language>
          <TrayIcons>
            <IconButton aria-label="Ícones ocultos"><Arrow up big color="#fff" /></IconButton>
            <IconButton aria-label="Energia"><PlugIcon /></IconButton>
            <IconButton aria-label="Rede"><NetworkIcon /></IconButton>
          </TrayIcons>
          <Clock>
            <div>21:11</div>
            <div>11-01-2015</div>
          </Clock>
          <ShowDesktop aria-label="Mostrar ambiente de trabalho" />
        </Tray>
      </Taskbar>
    </Screen>
  );
};

export default App;
